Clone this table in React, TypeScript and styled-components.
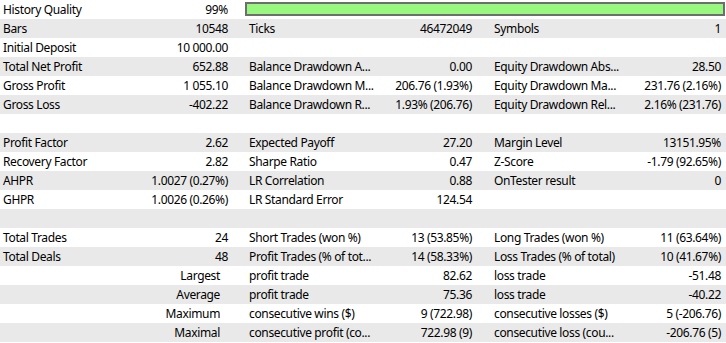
import React from "react";
import styled, { createGlobalStyle } from "styled-components";

const GlobalStyle = createGlobalStyle`
  html, body {
    margin: 0;
    padding: 0;
    background: #ffffff;
  }
  body {
    font-family: "Noto Sans", "Open Sans", sans-serif;
    font-size: 12px;
    color: #000000;
  }
`;

type Row = {
  cells?: string[];
  bar?: boolean;
  caption?: string;
};

const rows: Row[] = [
  { cells: ["History Quality", "99%"], bar: true },
  { cells: ["Bars", "10548", "Ticks", "46472049", "Symbols", "1"] },
  { cells: ["Initial Deposit", "10 000.00"] },
  {
    cells: [
      "Total Net Profit",
      "652.88",
      "Balance Drawdown A...",
      "0.00",
      "Equity Drawdown Abs...",
      "28.50",
    ],
  },
  {
    cells: [
      "Gross Profit",
      "1 055.10",
      "Balance Drawdown M...",
      "206.76 (1.93%)",
      "Equity Drawdown Ma...",
      "231.76 (2.16%)",
    ],
  },
  {
    cells: [
      "Gross Loss",
      "-402.22",
      "Balance Drawdown R...",
      "1.93% (206.76)",
      "Equity Drawdown Rel...",
      "2.16% (231.76)",
    ],
  },
  {},
  {
    cells: [
      "Profit Factor",
      "2.62",
      "Expected Payoff",
      "27.20",
      "Margin Level",
      "13151.95%",
    ],
  },
  {
    cells: [
      "Recovery Factor",
      "2.82",
      "Sharpe Ratio",
      "0.47",
      "Z-Score",
      "-1.79 (92.65%)",
    ],
  },
  {
    cells: [
      "AHPR",
      "1.0027 (0.27%)",
      "LR Correlation",
      "0.88",
      "OnTester result",
      "0",
    ],
  },
  {
    cells: ["GHPR", "1.0026 (0.26%)", "LR Standard Error", "124.54"],
  },
  {},
  {
    cells: [
      "Total Trades",
      "24",
      "Short Trades (won %)",
      "13 (53.85%)",
      "Long Trades (won %)",
      "11 (63.64%)",
    ],
  },
  {
    cells: [
      "Total Deals",
      "48",
      "Profit Trades (% of tot...",
      "14 (58.33%)",
      "Loss Trades (% of total)",
      "10 (41.67%)",
    ],
  },
  {
    caption: "Largest",
    cells: ["", "", "profit trade", "82.62", "loss trade", "-51.48"],
  },
  {
    caption: "Average",
    cells: ["", "", "profit trade", "75.36", "loss trade", "-40.22"],
  },
  {
    caption: "Maximum",
    cells: [
      "",
      "",
      "consecutive wins ($)",
      "9 (722.98)",
      "consecutive losses ($)",
      "5 (-206.76)",
    ],
  },
  {
    caption: "Maximal",
    cells: [
      "",
      "",
      "consecutive profit (co...",
      "722.98 (9)",
      "consecutive loss (cou...",
      "-206.76 (5)",
    ],
  },
];

const App = () => {
  return (
    <>
      <GlobalStyle />
      <Report>
        {rows.map((row, i) => {
          const c = row.cells || [];
          return (
            <ReportRow key={i} $shaded={i % 2 === 1}>
              {row.caption ? (
                <Caption>{row.caption}</Caption>
              ) : (
                <>
                  <Label $group={1}>{c[0]}</Label>
                  <Value $group={1}>{c[1]}</Value>
                </>
              )}
              {row.bar ? (
                <QualityBar />
              ) : (
                <>
                  <Label $group={2}>{c[2]}</Label>
                  <Value $group={2}>{c[3]}</Value>
                  <Label $group={3}>{c[4]}</Label>
                  <Value $group={3}>{c[5]}</Value>
                </>
              )}
            </ReportRow>
          );
        })}
      </Report>
    </>
  );
};

export default App;

const Report = styled.div`
  width: 726px;
  display: flex;
  flex-direction: column;
`;

// label, value, spacer for each of the three groups
const ReportRow = styled.div<{ $shaded: boolean }>`
  display: grid;
  grid-template-columns: 130px 102px 13px 130px 101px 14px 130px 106px;
  box-sizing: border-box;
  height: 19px;
  padding-top: 1px;
  line-height: 18px;
  background-color: ${(p) => (p.$shaded ? "#e9e9e9" : "#ffffff")};
  letter-spacing: -0.35px;
  white-space: nowrap;
`;

const Label = styled.div<{ $group: number }>`
  grid-row: 1;
  grid-column: ${(p) => (p.$group - 1) * 3 + 1};
  padding-left: ${(p) => (p.$group === 1 ? 3 : 4)}px;
`;

const Value = styled.div<{ $group: number }>`
  grid-row: 1;
  grid-column: ${(p) => (p.$group - 1) * 3 + 2};
  text-align: right;
  padding-right: ${(p) => (p.$group === 3 ? 5 : 4)}px;
`;

const Caption = styled.div`
  grid-row: 1;
  grid-column: 1 / span 2;
  text-align: right;
  padding-right: 12px;
`;

const QualityBar = styled.div`
  grid-row: 1;
  grid-column: 4 / -1;
  margin: 1px 1px 3px 0;
  box-sizing: border-box;
  border: 2px solid #6e6e6e;
  background-color: #98f77f;
`;
